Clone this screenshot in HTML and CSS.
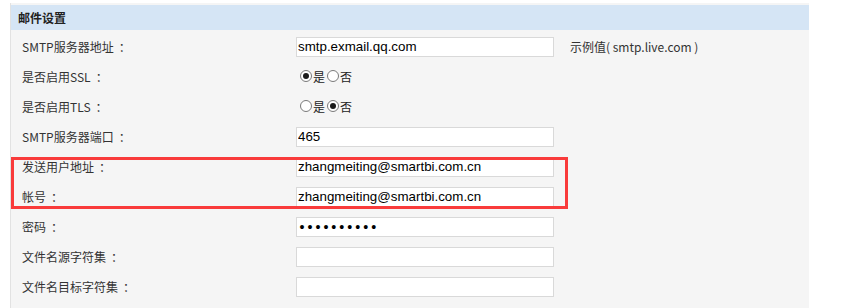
FILE: index.html
```html
<!DOCTYPE html>
<html lang="zh-CN">
<head>
<meta charset="utf-8">
<title>邮件设置</title>
<link rel="stylesheet" href="styles.css">
</head>
<body>
<div class="page">
  <section class="panel">
    <h2 class="panel-title">邮件设置</h2>
    <div class="form">
      <div class="row">
        <label class="label">SMTP服务器地址<span class="colon">：</span></label>
        <input class="field" type="text" value="smtp.exmail.qq.com">
        <span class="hint">示例值( smtp.live.com )</span>
      </div>
      <div class="row">
        <label class="label">是否启用SSL<span class="colon">：</span></label>
        <div class="radios">
          <input class="radio" type="radio" name="ssl" checked><span class="opt">是</span>
          <input class="radio" type="radio" name="ssl"><span class="opt">否</span>
        </div>
      </div>
      <div class="row">
        <label class="label">是否启用TLS<span class="colon">：</span></label>
        <div class="radios">
          <input class="radio" type="radio" name="tls"><span class="opt">是</span>
          <input class="radio" type="radio" name="tls" checked><span class="opt">否</span>
        </div>
      </div>
      <div class="row">
        <label class="label">SMTP服务器端口<span class="colon">：</span></label>
        <input class="field" type="text" value="465">
      </div>
      <div class="row">
        <label class="label">发送用户地址<span class="colon">：</span></label>
        <input class="field" type="text" value="zhangmeiting@smartbi.com.cn">
      </div>
      <div class="row">
        <label class="label">帐号<span class="colon">：</span></label>
        <input class="field" type="text" value="zhangmeiting@smartbi.com.cn">
      </div>
      <div class="row">
        <label class="label">密码<span class="colon">：</span></label>
        <input class="field pwd" type="password" value="1234567890">
      </div>
      <div class="row">
        <label class="label">文件名源字符集<span class="colon">：</span></label>
        <input class="field" type="text" value="">
      </div>
      <div class="row">
        <label class="label">文件名目标字符集<span class="colon">：</span></label>
        <input class="field" type="text" value="">
      </div>
    </div>
    <div class="highlight"></div>
  </section>
</div>
</body>
</html>
```

FILE: styles.css
```css
html, body {
  margin: 0;
  padding: 0;
  background: #ffffff;
}

.page {
  padding: 3px 0 0 10px;
  width: 799px;
}

.panel {
  position: relative;
  background: #f5f5f5;
  border-left: 1px solid #e2e2e2;
  padding-top: 2px;
  height: 310px;
  box-sizing: border-box;
  font-family: "Noto Sans CJK SC", "Noto Sans", sans-serif;
  font-size: 12px;
  color: #333333;
}

.panel-title {
  margin: 0;
  height: 25px;
  line-height: 25px;
  background: #d5e5f5;
  padding-left: 7px;
  font-size: 12px;
  font-weight: bold;
  color: #222222;
}

.form {
  padding: 1px 0 0 11px;
}

.row {
  display: grid;
  grid-template-columns: 274px 258px auto;
  align-items: center;
  height: 30px;
}

.label {
  white-space: nowrap;
}

.colon {
  padding-left: 5px;
}

.field {
  box-sizing: border-box;
  width: 258px;
  height: 20px;
  margin: 1px 0 0 0;
  padding: 0 1px;
  border: 1px solid #d9d9d9;
  background: #ffffff;
  font-family: "Liberation Sans", Arial, sans-serif;
  font-size: 13.33px;
  color: #000000;
  outline: none;
}

.pwd {
  font-family: "DejaVu Sans", sans-serif;
  font-size: 13.5px;
  letter-spacing: 0;
}

.hint {
  white-space: nowrap;
  padding-left: 16px;
  color: #333333;
}

.radios {
  display: flex;
  align-items: center;
  padding-left: 4px;
}

.radio {
  appearance: none;
  -webkit-appearance: none;
  box-sizing: border-box;
  width: 12px;
  height: 12px;
  margin: 0 1px 0 0;
  border: 1px solid #7a7a7a;
  border-radius: 50%;
  background: #ffffff;
  position: relative;
}

.radio:checked::after {
  content: "";
  position: absolute;
  left: 2px;
  top: 2px;
  width: 6px;
  height: 6px;
  border-radius: 50%;
  background: #1a1a1a;
}

.opt {
  margin-right: 2px;
  color: #222222;
}

.highlight {
  position: absolute;
  left: 0;
  top: 154px;
  width: 557px;
  height: 52px;
  box-sizing: border-box;
  border: 3px solid #f93b3b;
  pointer-events: none;
}
```
